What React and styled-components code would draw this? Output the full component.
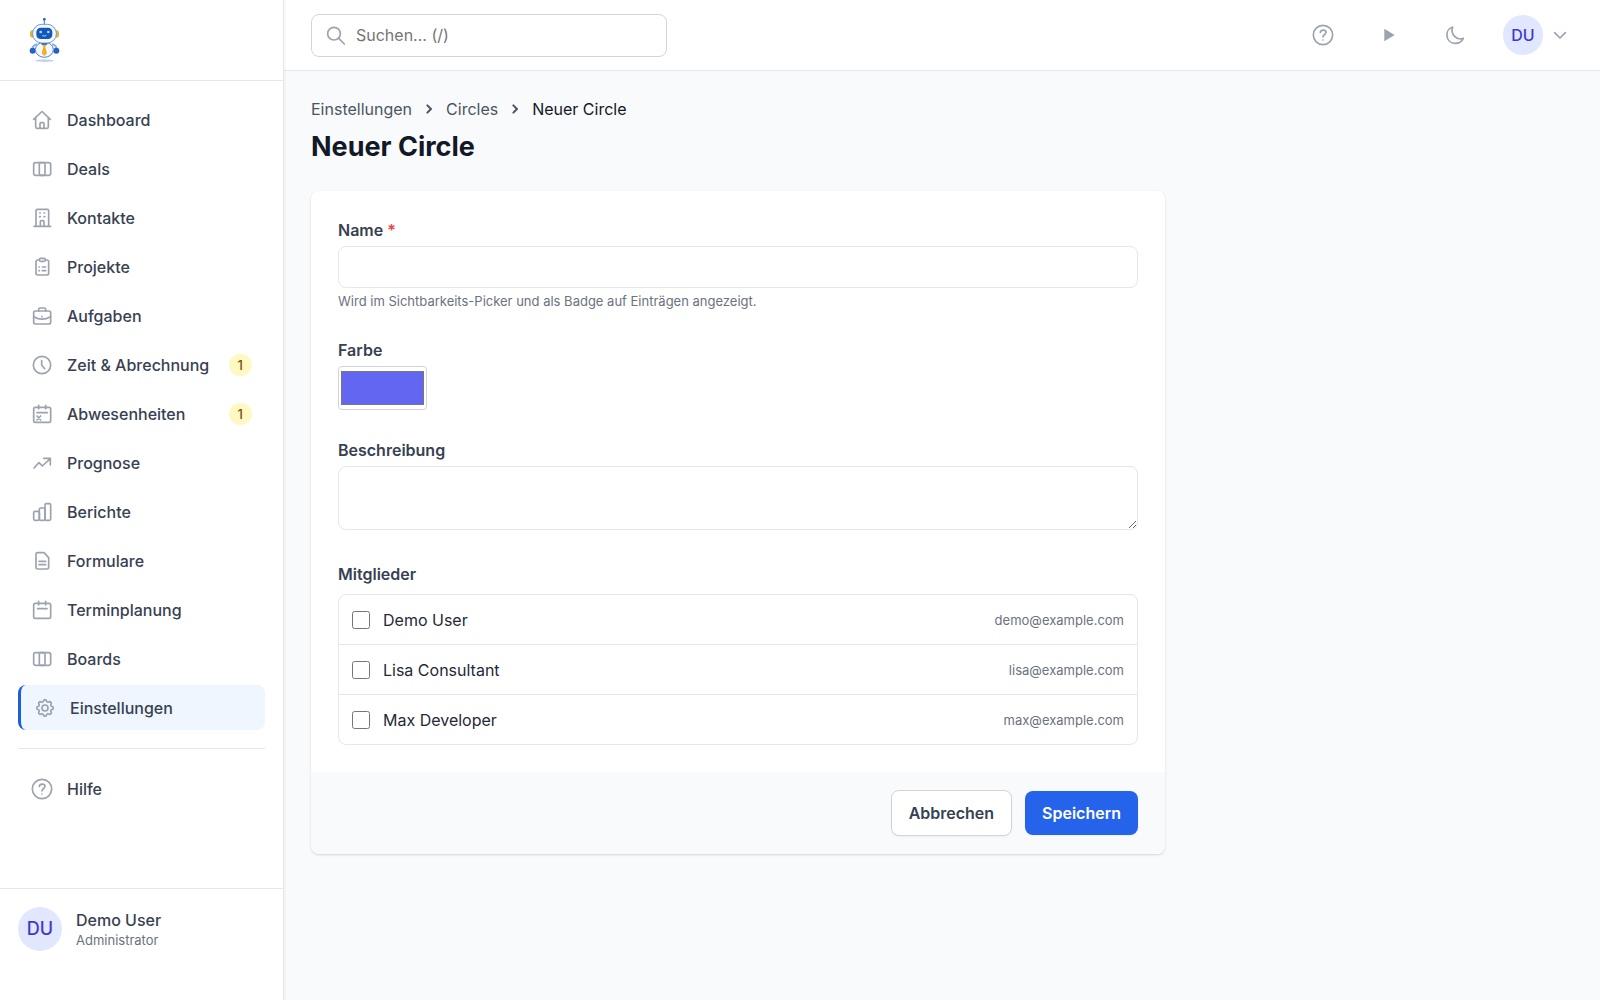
import React from "react";
import styled, { createGlobalStyle, css } from "styled-components";

const GlobalStyle = createGlobalStyle`
  *, *::before, *::after { box-sizing: border-box; }
  body {
    margin: 0;
    background: #f9fafb;
    color: #111827;
    font-family: Inter, "Liberation Sans", sans-serif;
    font-size: 16px;
    line-height: 22px;
  }
  h1, p, ul, fieldset, legend { margin: 0; padding: 0; }
  ul { list-style: none; }
  fieldset { border: 0; min-width: 0; }
  a { color: inherit; text-decoration: none; }
  button, input, textarea { font: inherit; color: inherit; }
`;

/* ---------- icons ---------- */

const Glyph = styled.svg`
  display: block;
  flex: none;
  width: 22px;
  height: 22px;
  fill: none;
  stroke: currentColor;
  stroke-width: 5;
  stroke-linecap: round;
  stroke-linejoin: round;
`;

const gearPath = (() => {
  const points = [];
  for (let i = 0; i < 96; i += 1) {
    const t = (i / 96) * Math.PI * 2;
    const wave = Math.tanh(1.5 * Math.cos(8 * t)) * 3;
    const r = 22 + wave;
    points.push(`${(33 + r * Math.sin(t)).toFixed(1)} ${(33 - r * Math.cos(t)).toFixed(1)}`);
  }
  return `M${points.join("L")}Z`;
})();

const shapes = {
  home: <path d="M8 31 31 9q2-2 4 0L58 31M14 26v28q0 4 4 4h30q4 0 4-4V26M27 58V44q0-3 3-3h6q3 0 3 3v14" />,
  columns: <><rect x="8" y="14" width="51" height="38" rx="6" /><rect x="25" y="14" width="17" height="38" rx="4" /></>,
  building: <path d="M9 58h50M15 58V11q0-4 4-4h30q4 0 4 4v47M28 58V44q0-3 3-3h5q3 0 3 3v14M26 18h2M39 18h2M26 29h2M39 29h2" />,
  clipboard: <><path d="M24 12h-4q-5 0-5 5v35q0 5 5 5h28q5 0 5-5V17q0-5-5-5h-4" /><rect x="25" y="7" width="18" height="9" rx="4" /><path d="M24 33h1M34 33h10M24 44h1M34 44h10" /></>,
  briefcase: <><rect x="8" y="18" width="51" height="39" rx="5" /><path d="M23 18v-5q0-4 4-4h13q4 0 4 4v5M8 35q25 15 51 0M33 34v1" /></>,
  clock: <><circle cx="33" cy="33" r="26" /><path d="M32 20v13l9 11" /></>,
  calendarX: <><rect x="8" y="13" width="51" height="45" rx="5" /><path d="M23 7v11M44 7v11M18 29h31M18 39l11 12M29 39 18 51" /></>,
  trend: <path d="m9 48 15-16 10 10 24-22M38 19h20v20" />,
  bars: <><rect x="8" y="31" width="17" height="27" rx="4" /><rect x="25" y="21" width="17" height="37" rx="4" /><rect x="42" y="8" width="17" height="50" rx="4" /></>,
  document: <path d="M20 8h19l14 15v29q0 5-5 5H20q-5 0-5-5V13q0-5 5-5ZM24 34h20M24 44h20" />,
  calendar: <><rect x="8" y="13" width="51" height="45" rx="5" /><path d="M23 7v11M44 7v11M20 29h28" /></>,
  gear: <><path d={gearPath} /><circle cx="33" cy="33" r="9" /></>,
  help: <><circle cx="33" cy="33" r="29" /><path d="M25 25c1-9 17-9 17 0 0 7-9 6-9 14M33 48v0" /></>,
  search: <><circle cx="27" cy="29" r="19" /><path d="m41 43 17 17" /></>,
  play: <path d="M19 14v38l31-19Z" fill="currentColor" stroke="none" />,
  moon: <path d="M26 9c-27 9-21 49 8 49 11 0 20-6 24-15-19 8-40-12-32-34Z" />,
  chevronDown: <path d="m17 26 16 16 16-16" />,
  chevronRight: <path d="m28 22 11 11-11 11" strokeWidth="6" />,
};

const Icon = ({ name }) => (
  <Glyph viewBox="0 0 66 66" aria-hidden="true">{shapes[name]}</Glyph>
);

const LogoSvg = styled.svg`
  display: block;
  width: 32px;
  height: 46px;
`;

const Logo = () => (
  <LogoSvg viewBox="0 0 96 138" role="img" aria-label="Roboter">
    <ellipse cx="50" cy="131" rx="28" ry="4" fill="#c3d2ea" />
    <path d="M49 8v14" stroke="#54749c" strokeWidth="3" />
    <circle cx="49" cy="7" r="4" fill="#1f5fc4" />
    <rect x="6" y="40" width="14" height="22" rx="7" fill="#e7ae3a" />
    <rect x="79" y="40" width="14" height="22" rx="7" fill="#e7ae3a" />
    <path d="M27 82c-10 2-14 8-14 16M72 82c10 2 14 8 14 16" stroke="#8fb3e3" strokeWidth="6" fill="none" />
    <circle cx="14" cy="101" r="9" fill="#2463bd" />
    <circle cx="85" cy="101" r="9" fill="#2463bd" />
    <ellipse cx="49" cy="98" rx="27" ry="23" fill="#f3f8ff" stroke="#4f82c9" strokeWidth="3" />
    <rect x="14" y="22" width="71" height="56" rx="27" fill="#f5f9ff" stroke="#6e9bd6" strokeWidth="3" />
    <rect x="25" y="32" width="48" height="34" rx="13" fill="#1556bd" />
    <circle cx="38" cy="45" r="4" fill="#a5ddff" />
    <circle cx="61" cy="45" r="4" fill="#a5ddff" />
    <path d="M43 55q6 5 12 0" stroke="#a5ddff" strokeWidth="3" fill="none" />
    <path d="M37 79h24l-7 6H44Z" fill="#245fae" />
    <path d="M44 83h10l-2 8 5 18-8 8-8-8 5-18Z" fill="#f2ae23" />
  </LogoSvg>
);

/* ---------- shell ---------- */

const Shell = styled.div`
  display: grid;
  grid-template-columns: 284px minmax(0, 1fr);
  min-height: 100vh;
`;

const Sidebar = styled.aside`
  position: sticky;
  top: 0;
  height: 100vh;
  display: flex;
  flex-direction: column;
  background: #fff;
  border-right: 1px solid #e5e7eb;
  box-shadow: 1px 0 2px rgba(0, 0, 0, 0.05);
`;

const Brand = styled.a`
  display: block;
  padding: 17px 28px;
  border-bottom: 1px solid #e5e7eb;
`;

const Nav = styled.nav`
  flex: 1;
  min-height: 0;
  overflow-y: auto;
  padding: 16px 18px;
`;

const NavList = styled.ul`
  display: grid;
  gap: 4px;
  & + & {
    margin-top: 18px;
    padding-top: 17px;
    border-top: 1px solid #e5e7eb;
  }
`;

const NavLink = styled.a`
  display: flex;
  align-items: center;
  gap: 14px;
  height: 45px;
  padding: 0 13px;
  border-radius: 8px;
  color: #374151;
  font-weight: 500;
  ${(p) => p.$active && css`
    background: #eff6ff;
    border-left: 3px solid #1d5fd8;
  `}
  svg { color: #9ca3af; }
`;

const Badge = styled.span`
  margin-left: auto;
  padding: 0 9px;
  border-radius: 11px;
  background: #fef9c3;
  color: #854d0e;
  font-size: 13px;
`;

const Account = styled.div`
  display: flex;
  align-items: center;
  gap: 14px;
  padding: 18px 18px 49px;
  border-top: 1px solid #e5e7eb;
`;

const Avatar = styled.span`
  display: grid;
  place-items: center;
  flex: none;
  width: ${(p) => p.$size}px;
  height: ${(p) => p.$size}px;
  border-radius: 50%;
  background: #e0e7ff;
  color: #4338ca;
  font-size: ${(p) => (p.$size > 40 ? 18 : 16)}px;
  font-weight: 500;
`;

const AccountName = styled.p`
  color: #374151;
  font-weight: 500;
`;

const AccountRole = styled.p`
  color: #6b7280;
  font-size: 13px;
  line-height: 18px;
`;

/* ---------- top bar ---------- */

const Topbar = styled.header`
  display: flex;
  align-items: center;
  justify-content: space-between;
  height: 71px;
  padding: 0 27px;
  background: #fff;
  border-bottom: 1px solid #e5e7eb;
`;

const SearchBox = styled.label`
  display: flex;
  align-items: center;
  gap: 9px;
  width: 356px;
  height: 43px;
  padding: 0 13px;
  background: #fff;
  border: 1px solid #d1d5db;
  border-radius: 8px;
  color: #9ca3af;
`;

const SearchInput = styled.input`
  flex: 1;
  min-width: 0;
  padding: 0;
  border: 0;
  outline: 0;
  background: transparent;
  color: #111827;
  &::placeholder { color: #757575; opacity: 1; }
`;

const Tools = styled.div`
  display: flex;
  align-items: center;
  gap: 22px;
`;

const ToolButton = styled.button`
  display: grid;
  place-items: center;
  width: 44px;
  height: 44px;
  padding: 0;
  border: 0;
  background: none;
  color: #9ca3af;
`;

const UserButton = styled.button`
  display: flex;
  align-items: center;
  gap: 6px;
  padding: 0 2px 0 4px;
  border: 0;
  background: none;
  color: #9ca3af;
`;

/* ---------- page ---------- */

const Page = styled.main`
  padding: 27px;
`;

const Crumbs = styled.nav`
  display: flex;
  align-items: center;
  gap: 6px;
  color: #4b5563;
  [aria-current] { color: #111827; }
`;

const Title = styled.h1`
  margin: 9px 0 26px;
  font-size: 27px;
  line-height: 36px;
  font-weight: 700;
`;

const Card = styled.form`
  max-width: 854px;
  overflow: hidden;
  border-radius: 8px;
  background: #fff;
  box-shadow: 0 1px 3px rgba(0, 0, 0, 0.1), 0 1px 2px rgba(0, 0, 0, 0.06);
`;

const CardBody = styled.div`
  display: grid;
  gap: 29px;
  padding: 28px 27px 27px;
`;

const Field = styled.div`
  display: flex;
  flex-direction: column;
  align-items: flex-start;
`;

const labelText = css`
  display: block;
  margin-bottom: 5px;
  color: #374151;
  font-weight: 600;
`;

const Label = styled.label`${labelText}`;

const Required = styled.span`
  color: #ef4444;
`;

const TextInput = styled.input`
  width: 100%;
  height: 42px;
  padding: 0 13px;
  border: 1px solid #e5e7eb;
  border-radius: 8px;
  background: #fff;
`;

const TextArea = styled.textarea`
  display: block;
  width: 100%;
  height: 64px;
  margin-bottom: 4px;
  padding: 9px 13px;
  border: 1px solid #e5e7eb;
  border-radius: 8px;
  background: #fff;
  resize: vertical;
`;

const ColorInput = styled.input`
  width: 89px;
  height: 44px;
  padding: 0;
  border: 1px solid #d1d5db;
  border-radius: 4px;
  background: #fff;
`;

const Hint = styled.p`
  margin-top: 4px;
  color: #6b7280;
  font-size: 13px;
  line-height: 18px;
`;

const Legend = styled.legend`
  ${labelText}
  margin-bottom: 9px;
`;

const Members = styled.ul`
  border: 1px solid #e5e7eb;
  border-radius: 8px;
  li + li { border-top: 1px solid #e5e7eb; }
`;

const Member = styled.label`
  display: flex;
  align-items: center;
  gap: 13px;
  height: 49px;
  padding: 0 13px;
  color: #1f2937;
`;

const Checkbox = styled.input`
  width: 18px;
  height: 18px;
  margin: 0;
`;

const Email = styled.span`
  margin-left: auto;
  color: #6b7280;
  font-size: 13px;
`;

const CardFooter = styled.div`
  display: flex;
  justify-content: flex-end;
  align-items: center;
  gap: 13px;
  padding: 18px 27px;
  background: #f9fafb;
`;

const Button = styled.button`
  height: ${(p) => (p.$primary ? 44 : 46)}px;
  padding: 0 17px;
  border: ${(p) => (p.$primary ? "0" : "1px solid #d1d5db")};
  border-radius: 8px;
  background: ${(p) => (p.$primary ? "#2563eb" : "#fff")};
  color: ${(p) => (p.$primary ? "#fff" : "#374151")};
  font-weight: 600;
  box-shadow: 0 1px 2px rgba(0, 0, 0, 0.05);
`;

/* ---------- data ---------- */

const navItems = [
  { icon: "home", text: "Dashboard" },
  { icon: "columns", text: "Deals" },
  { icon: "building", text: "Kontakte" },
  { icon: "clipboard", text: "Projekte" },
  { icon: "briefcase", text: "Aufgaben" },
  { icon: "clock", text: "Zeit & Abrechnung", badge: 1 },
  { icon: "calendarX", text: "Abwesenheiten", badge: 1 },
  { icon: "trend", text: "Prognose" },
  { icon: "bars", text: "Berichte" },
  { icon: "document", text: "Formulare" },
  { icon: "calendar", text: "Terminplanung" },
  { icon: "columns", text: "Boards" },
  { icon: "gear", text: "Einstellungen", active: true },
];

const helpItems = [{ icon: "help", text: "Hilfe" }];

const members = [
  { name: "Demo User", email: "demo@example.com" },
  { name: "Lisa Consultant", email: "lisa@example.com" },
  { name: "Max Developer", email: "max@example.com" },
];

const NavGroup = ({ items }) => (
  <NavList>
    {items.map((item) => (
      <li key={item.text}>
        <NavLink href="#" $active={item.active} aria-current={item.active ? "page" : undefined}>
          <Icon name={item.icon} />
          {item.text}
          {item.badge && <Badge>{item.badge}</Badge>}
        </NavLink>
      </li>
    ))}
  </NavList>
);

export default function App() {
  return (
    <>
      <GlobalStyle />
      <Shell>
        <Sidebar>
          <Brand href="#"><Logo /></Brand>
          <Nav>
            <NavGroup items={navItems} />
            <NavGroup items={helpItems} />
          </Nav>
          <Account>
            <Avatar $size={44}>DU</Avatar>
            <div>
              <AccountName>Demo User</AccountName>
              <AccountRole>Administrator</AccountRole>
            </div>
          </Account>
        </Sidebar>

        <div>
          <Topbar>
            <SearchBox>
              <Icon name="search" />
              <SearchInput type="search" placeholder="Suchen... (/)" aria-label="Suchen" />
            </SearchBox>
            <Tools>
              <ToolButton type="button" aria-label="Hilfe"><Icon name="help" /></ToolButton>
              <ToolButton type="button" aria-label="Timer starten"><Icon name="play" /></ToolButton>
              <ToolButton type="button" aria-label="Dunkles Design"><Icon name="moon" /></ToolButton>
              <UserButton type="button" aria-label="Benutzermenü">
                <Avatar $size={40}>DU</Avatar>
                <Icon name="chevronDown" />
              </UserButton>
            </Tools>
          </Topbar>

          <Page>
            <Crumbs aria-label="Brotkrumen">
              <a href="#">Einstellungen</a>
              <Icon name="chevronRight" />
              <a href="#">Circles</a>
              <Icon name="chevronRight" />
              <span aria-current="page">Neuer Circle</span>
            </Crumbs>
            <Title>Neuer Circle</Title>

            <Card onSubmit={(e) => e.preventDefault()}>
              <CardBody>
                <Field>
                  <Label htmlFor="circle-name">Name <Required>*</Required></Label>
                  <TextInput id="circle-name" type="text" required />
                  <Hint>Wird im Sichtbarkeits-Picker und als Badge auf Einträgen angezeigt.</Hint>
                </Field>
                <Field>
                  <Label htmlFor="circle-color">Farbe</Label>
                  <ColorInput id="circle-color" type="color" defaultValue="#6366f1" />
                </Field>
                <Field>
                  <Label htmlFor="circle-description">Beschreibung</Label>
                  <TextArea id="circle-description" />
                </Field>
                <fieldset>
                  <Legend>Mitglieder</Legend>
                  <Members>
                    {members.map((m) => (
                      <li key={m.email}>
                        <Member>
                          <Checkbox type="checkbox" />
                          {m.name}
                          <Email>{m.email}</Email>
                        </Member>
                      </li>
                    ))}
                  </Members>
                </fieldset>
              </CardBody>
              <CardFooter>
                <Button type="button">Abbrechen</Button>
                <Button type="submit" $primary>Speichern</Button>
              </CardFooter>
            </Card>
          </Page>
        </div>
      </Shell>
    </>
  );
}
